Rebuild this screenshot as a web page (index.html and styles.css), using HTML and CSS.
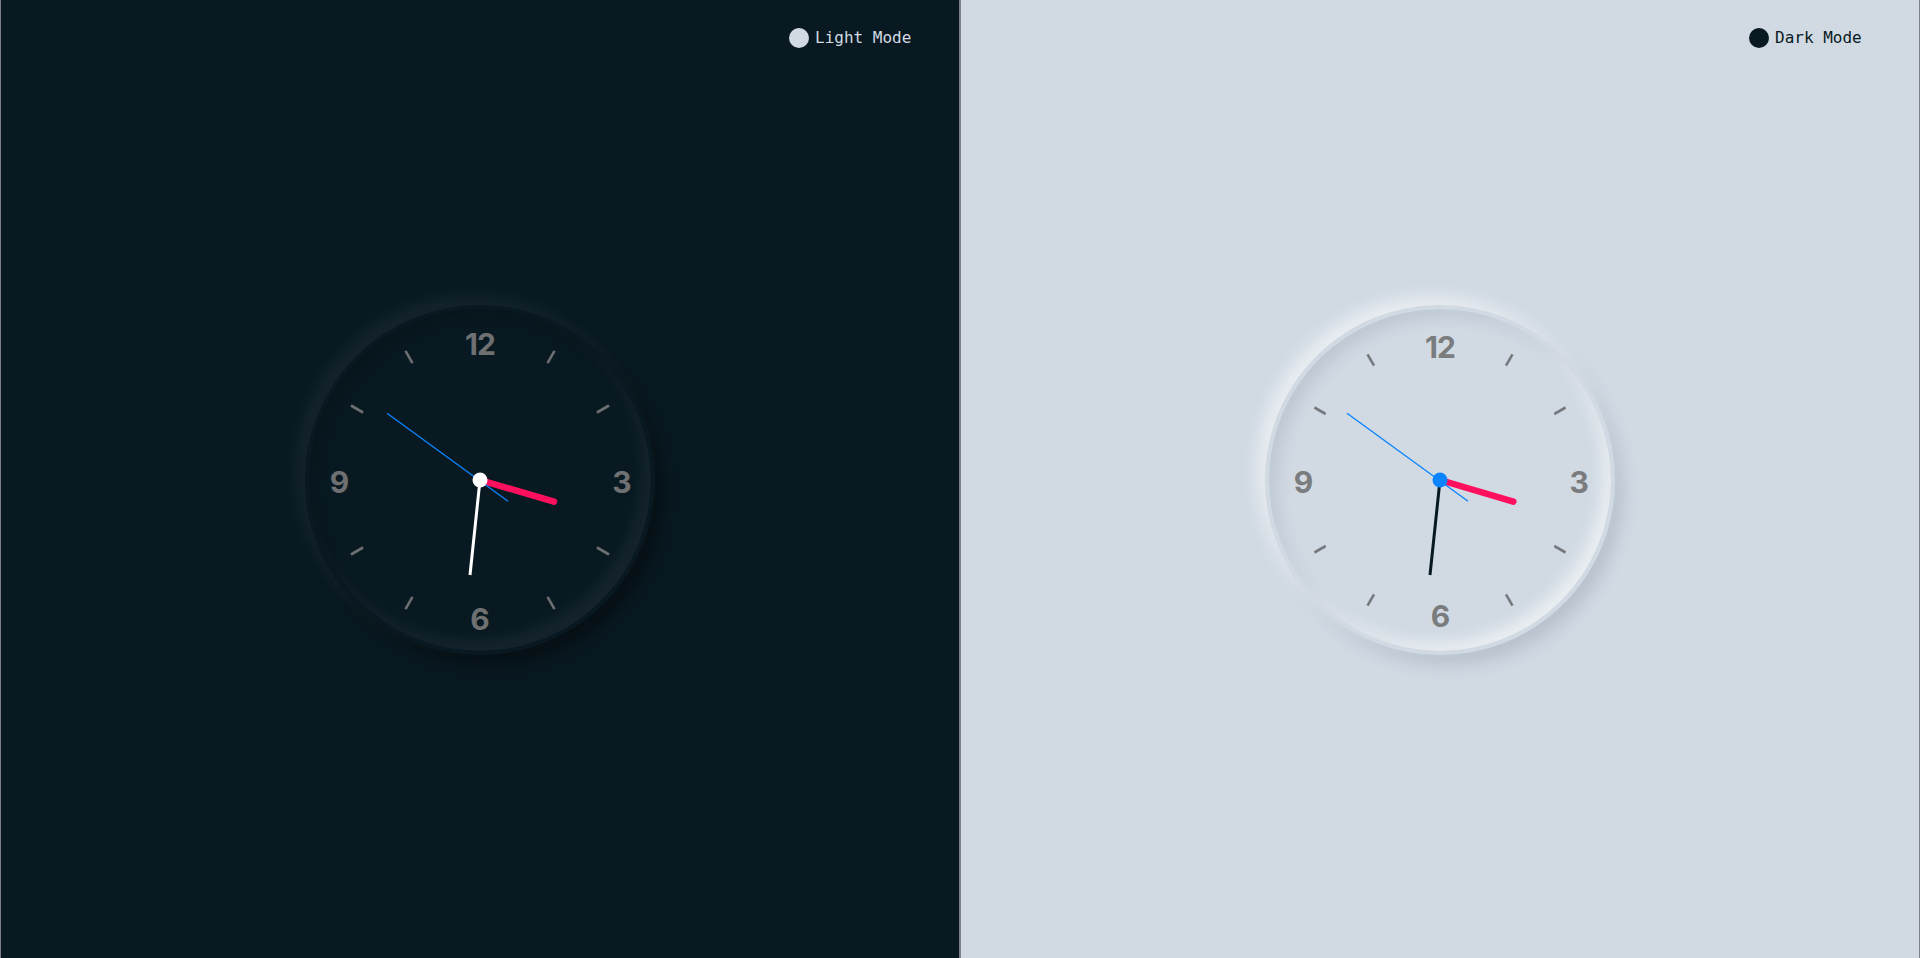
FILE: index.html
```html
<!DOCTYPE html>
<html lang="en">
<head>
<meta charset="utf-8">
<title>Neumorphic Clock</title>
<link rel="stylesheet" href="styles.css">
</head>
<body>
  <main class="panes">
    <section class="pane pane-dark">
      <button class="toggle" type="button">
        <span class="toggle-dot"></span>
        <span class="toggle-label">Light Mode</span>
      </button>
      <div class="clock">
        <svg class="face" viewBox="-171 -171 342 342" width="342" height="342">
          <g class="ticks">
            <line x1="0" y1="-135" x2="0" y2="-149" transform="rotate(30)"/>
            <line x1="0" y1="-135" x2="0" y2="-149" transform="rotate(60)"/>
            <line x1="0" y1="-135" x2="0" y2="-149" transform="rotate(120)"/>
            <line x1="0" y1="-135" x2="0" y2="-149" transform="rotate(150)"/>
            <line x1="0" y1="-135" x2="0" y2="-149" transform="rotate(210)"/>
            <line x1="0" y1="-135" x2="0" y2="-149" transform="rotate(240)"/>
            <line x1="0" y1="-135" x2="0" y2="-149" transform="rotate(300)"/>
            <line x1="0" y1="-135" x2="0" y2="-149" transform="rotate(330)"/>
          </g>
          <g class="nums">
            <text x="0" y="-125">12</text>
            <text x="141.5" y="13">3</text>
            <text x="-0.5" y="150">6</text>
            <text x="-141" y="13">9</text>
          </g>
          <line class="hand-hr" x1="0" y1="0" x2="74" y2="21.7"/>
          <line class="hand-mn" x1="0" y1="0" x2="-10" y2="95"/>
          <line class="hand-sc" x1="28" y1="21.3" x2="-93" y2="-66.7"/>
          <circle class="pin" cx="0" cy="0" r="7.5"/>
        </svg>
      </div>
    </section>
    <section class="pane pane-light">
      <button class="toggle" type="button">
        <span class="toggle-dot"></span>
        <span class="toggle-label">Dark Mode</span>
      </button>
      <div class="clock">
        <svg class="face" viewBox="-171 -171 342 342" width="342" height="342">
          <g class="ticks">
            <line x1="0" y1="-132" x2="0" y2="-145" transform="rotate(30)"/>
            <line x1="0" y1="-132" x2="0" y2="-145" transform="rotate(60)"/>
            <line x1="0" y1="-132" x2="0" y2="-145" transform="rotate(120)"/>
            <line x1="0" y1="-132" x2="0" y2="-145" transform="rotate(150)"/>
            <line x1="0" y1="-132" x2="0" y2="-145" transform="rotate(210)"/>
            <line x1="0" y1="-132" x2="0" y2="-145" transform="rotate(240)"/>
            <line x1="0" y1="-132" x2="0" y2="-145" transform="rotate(300)"/>
            <line x1="0" y1="-132" x2="0" y2="-145" transform="rotate(330)"/>
          </g>
          <g class="nums">
            <text x="0" y="-122">12</text>
            <text x="138.7" y="12.7">3</text>
            <text x="0" y="146.5">6</text>
            <text x="-137" y="12.7">9</text>
          </g>
          <line class="hand-hr" x1="0" y1="0" x2="73.3" y2="21.7"/>
          <line class="hand-mn" x1="0" y1="0" x2="-10" y2="95"/>
          <line class="hand-sc" x1="28" y1="21.3" x2="-93" y2="-66.7"/>
          <circle class="pin" cx="0" cy="0" r="7.5"/>
        </svg>
      </div>
    </section>
  </main>
</body>
</html>
```

FILE: styles.css
```css
* { box-sizing: border-box; }

html, body {
  margin: 0;
  height: 100%;
}

body {
  font-family: "DejaVu Sans Mono", "Liberation Mono", monospace;
}

.panes {
  display: flex;
  height: 958px;
}

.pane {
  width: 960px;
  height: 958px;
  border-left: 1px solid #7d8185;
  border-right: 1px solid #7d8185;
  padding-top: 2px;
  display: grid;
  grid-template-columns: 1fr;
  grid-template-rows: 1fr;
}

.pane-dark { background: #091921; }
.pane-light { background: #d1dae3; }

.toggle {
  grid-area: 1 / 1;
  justify-self: end;
  align-self: start;
  width: 130px;
  height: 20px;
  margin: 26px 40px 0 0;
  padding: 0;
  border: 0;
  background: none;
  display: flex;
  align-items: center;
  gap: 6px;
  font-family: "DejaVu Sans Mono", "Liberation Mono", monospace;
  font-size: 16px;
  line-height: 20px;
  cursor: pointer;
}

.toggle-dot {
  width: 20px;
  height: 20px;
  border-radius: 50%;
  flex: none;
}

.pane-dark .toggle-label { color: #d1dae3; }
.pane-dark .toggle-dot { background: #d1dae3; }
.pane-light .toggle-label { color: #091921; }
.pane-light .toggle-dot { background: #091921; }

.clock {
  grid-area: 1 / 1;
  justify-self: center;
  align-self: center;
  width: 350px;
  height: 350px;
  border-radius: 50%;
  border: 4px solid transparent;
}

.face { display: block; }

.pane-dark .clock {
  background: #091921;
  border-color: #091921;
  box-shadow:
    -8px -8px 18px rgba(255, 255, 255, 0.06),
    10px 12px 16px rgba(0, 0, 0, 0.35),
    inset 6px 8px 14px rgba(0, 0, 0, 0.18),
    inset -8px -10px 16px rgba(255, 255, 255, 0.06);
}

.pane-light .clock {
  background: #d1dae3;
  border-color: #d1dae3;
  box-shadow:
    -8px -8px 16px rgba(255, 255, 255, 0.55),
    8px 10px 16px rgba(80, 100, 120, 0.2),
    inset 8px 8px 14px rgba(80, 100, 120, 0.14),
    inset -8px -8px 14px rgba(255, 255, 255, 0.55);
}

.ticks line {
  stroke-width: 2.6;
  stroke-linecap: butt;
}

.pane-dark .ticks line { stroke: #6c6f71; }
.pane-light .ticks line { stroke: #777a7c; }

.nums text {
  font-family: "Inter", "Noto Sans", sans-serif;
  font-weight: 700;
  font-size: 30px;
  letter-spacing: -1px;
  text-anchor: middle;
}

.pane-dark .nums text { fill: #6e7072; }
.pane-light .nums text { fill: #7a7c7e; }

.hand-hr {
  stroke: #ff105e;
  stroke-width: 6.5;
  stroke-linecap: round;
}

.hand-mn {
  stroke-width: 3;
  stroke-linecap: butt;
}

.pane-dark .hand-mn { stroke: #ffffff; }
.pane-light .hand-mn { stroke: #091921; }

.hand-sc {
  stroke: #0a84ff;
  stroke-width: 1.4;
}

.pane-dark .pin { fill: #ffffff; }
.pane-light .pin { fill: #0a84ff; }
```
